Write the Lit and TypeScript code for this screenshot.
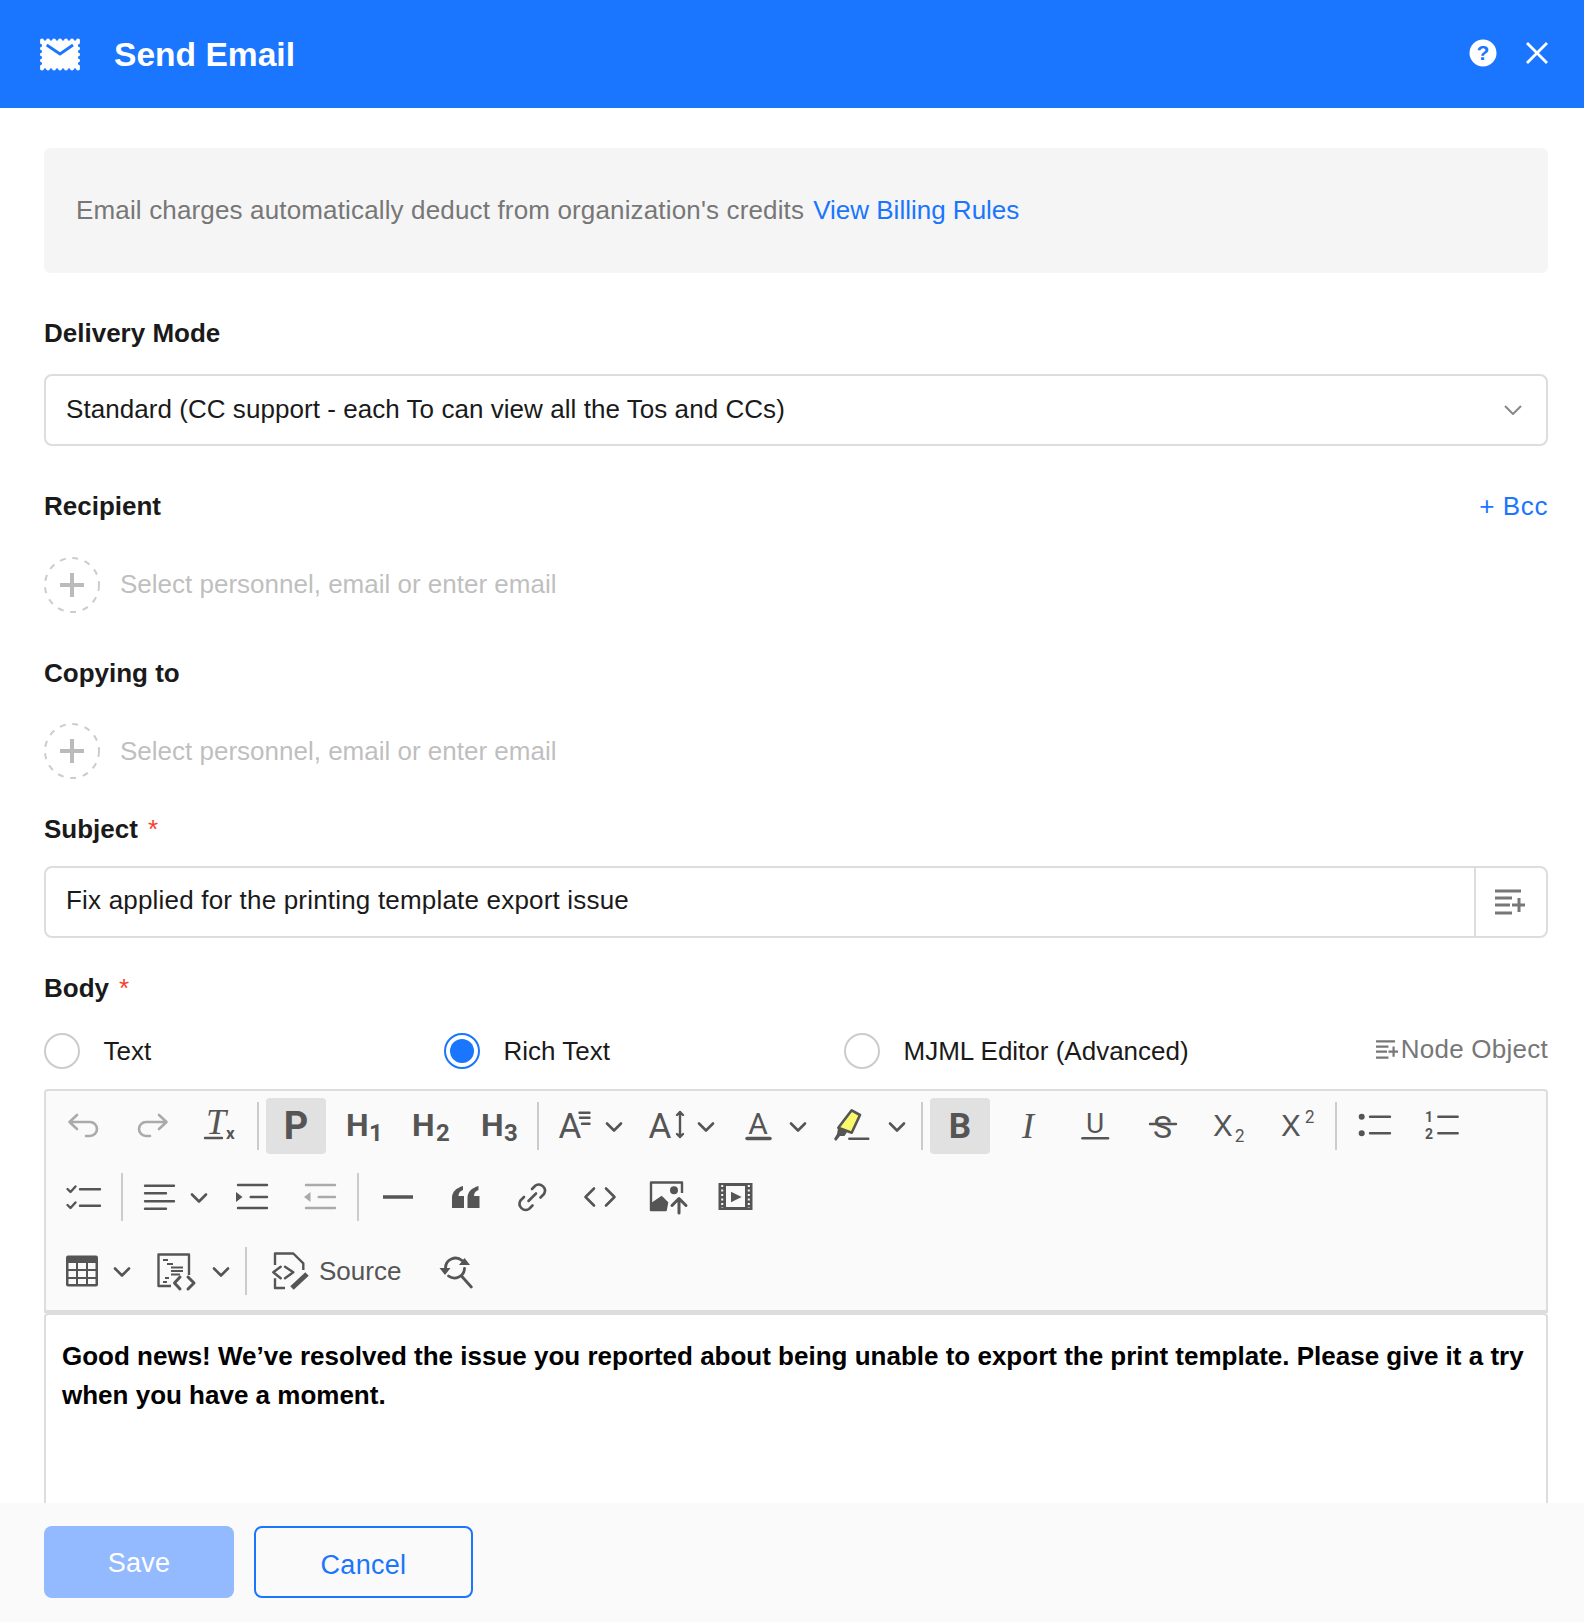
import { LitElement, html, css, svg } from 'lit';
import { customElement } from 'lit/decorators.js';

const roboto = 'font-family:Roboto,sans-serif';
const inter = 'font-family:Inter,sans-serif';

const icons = {
  undo: svg`<path class="s" d="M13 9 L5.5 16 L13 23 M5.5 16 H26 a7 7 0 0 1 0 14 H22"/>`,
  redo: svg`<path class="s" d="M27 9 L34.5 16 L27 23 M34.5 16 H14 a7 7 0 0 0 0 14 H18"/>`,
  clear: svg`<text x="6" y="28" font-size="36" style="font-family:'Liberation Serif',serif;font-style:italic">T<tspan dy="5" font-size="17" font-weight="700" style="font-style:normal;font-family:Roboto,sans-serif">x</tspan></text>
    <path class="s t" d="M5 32 H22"/>`,
  p: svg`<text x="20" y="33" font-size="38" font-weight="700" text-anchor="middle" style=${roboto}>P</text>`,
  h1: svg`<text x="2" y="30" font-size="32" font-weight="700" style=${roboto}>H</text><text x="25" y="35" font-size="24" font-weight="700" style=${roboto}>1</text>`,
  h2: svg`<text x="0" y="30" font-size="32" font-weight="700" style=${roboto}>H</text><text x="24" y="35" font-size="24" font-weight="700" style=${roboto}>2</text>`,
  h3: svg`<text x="1" y="30" font-size="32" font-weight="700" style=${roboto}>H</text><text x="24" y="35" font-size="24" font-weight="700" style=${roboto}>3</text>`,
  family: svg`<text x="20" y="32" font-size="35" text-anchor="middle" style=${roboto}>A</text>
    <path class="s t" d="M29.5 6.7 H39.5 M30 11.7 H39.5 M32 17.7 H39.5"/>`,
  size: svg`<text x="15" y="32" font-size="35" text-anchor="middle" style=${roboto}>A</text>
    <path class="s t" d="M35 6 V31 M32 9 L35 6 L38 9 M32 28 L35 31 L38 28"/>`,
  color: svg`<text x="19" y="28" font-size="30" text-anchor="middle" style=${roboto}>A</text><path class="s w35" d="M8 32.5 H31"/>`,
  highlight: svg`<path d="M23.7 4.3 L32 9 L23.7 26.7 L10.3 21.7 Z" fill="#f9f96b" stroke="#555" stroke-width="2.6" stroke-linejoin="round"/>
    <path class="f" d="M10.3 21 L19 26 L16.5 30 L12 30 L8 35 L6 33 L9 28 Z"/><path class="s t" d="M21.3 32.7 H40.3"/>`,
  bold: svg`<text x="20" y="32" font-size="35" font-weight="700" text-anchor="middle" style=${roboto}>B</text>`,
  italic: svg`<text x="20" y="32" font-size="36" text-anchor="middle" style="font-family:'Liberation Serif',serif;font-style:italic">I</text>`,
  under: svg`<text x="19" y="27" font-size="28" text-anchor="middle" style=${roboto}>U</text><path class="s" d="M6.5 32.3 H32"/>`,
  strike: svg`<text x="18.500" y="32" font-size="32" text-anchor="middle" style=${roboto}>S</text><path class="s t" d="M6 18 H32"/>`,
  sub: svg`<text x="1" y="30" font-size="29" style=${inter}>X</text><text x="22.500" y="36" font-size="17" style=${inter}>2</text>`,
  sup: svg`<text x="1" y="30" font-size="29" style=${inter}>X</text><text x="24.500" y="17" font-size="17" style=${inter}>2</text>`,
  ul: svg`<circle class="f" cx="7.7" cy="10.7" r="3"/><circle class="f" cx="7.7" cy="27.3" r="3"/><path class="s t" d="M16 10.7 H36 M16 27.3 H36"/>`,
  ol: svg`<text x="7" y="16" font-size="14" font-weight="700" text-anchor="middle" style=${roboto}>1</text><text x="7" y="33" font-size="14" font-weight="700" text-anchor="middle" style=${roboto}>2</text><path class="s t" d="M16.3 10.7 H35.7 M16.3 27.3 H35.7"/>`,
  todo: svg`<path class="s t" d="M16 12.3 H36 M16 28.7 H36 M3.5 12 L6.5 15 L11.5 9.5 M3.5 28 L6.5 31 L11.5 25.5"/>`,
  align: svg`<path class="s t" d="M6 8.7 H35 M6 16.3 H27 M6 24.3 H35 M6 31.7 H27"/>`,
  indent: svg`<path class="s t" d="M6 8 H35 M18.7 20 H35 M6 31 H35"/><path class="f" d="M4 15 L10.5 20 L4 25 Z"/>`,
  outdent: svg`<path class="s t" d="M6 8 H35 M18.7 20 H35 M6 31 H35"/><path class="f" d="M10.5 15 L4 20 L10.5 25 Z"/>`,
  hr: svg`<path class="s w35 butt" d="M7 20 H37"/>`,
  quote: svg`<path class="f" d="M8 31 V21 C8 15 12 11 19 9 V13 C16 14 14.500 16 14.500 19 H20 V31 Z M23.500 31 V21 C23.500 15 27.500 11 34.500 9 V13 C31.500 14 30 16 30 19 H35.500 V31 Z"/>`,
  link: svg`<path class="s" d="M20 12 L23.500 8.500 A6.200 6.200 0 0 1 32 17 L28.500 20.500 M20.500 28.500 L17 32 A6.200 6.200 0 0 1 8.500 23.500 L12 20 M16.500 24 L24 16.500"/>`,
  code: svg`<path class="s" d="M14 11.5 L5.5 20 L14 28.5 M26 11.5 L34.5 20 L26 28.5"/>`,
  image: svg`<path class="s t butt" d="M34 16 V5.5 H3 V33 H18"/><circle class="f" cx="26" cy="13.3" r="4"/>
    <path class="f" d="M3 26 L13.7 18.7 L20.3 25.3 L18.7 34 H3 Z"/><path class="s w3" d="M31 21.5 V36 M24 28.5 L31 21.5 L38 28.5"/>`,
  video: svg`<path class="f" fill-rule="evenodd" d="M2.500 6 H36.500 V33 H2.500 Z M10 9 V30 H29 V9 Z"/>
    <path fill="none" stroke="#fafafa" stroke-width="2" stroke-dasharray="2 2.500" d="M6.200 8 V31 M32.800 8 V31"/><path class="f" d="M15 14.7 L25.700 20 L15 25.300 Z"/>`,
  table: svg`<rect class="f" x="4" y="4.5" width="32" height="31" rx="2"/>
    <path fill="#fafafa" d="M6.500 12 H14 V18 H6.500 Z M16 12 H24 V18 H16 Z M26 12 H33.500 V18 H26 Z M6.500 20 H14 V26 H6.500 Z M16 20 H24 V26 H16 Z M26 20 H33.500 V26 H26 Z M6.500 28 H14 V33 H6.500 Z M16 28 H24 V33 H16 Z M26 28 H33.500 V33 H26 Z"/>`,
  block: svg`<path class="s t butt" d="M18 35 H5.500 V3.500 H36 V24"/><path class="s w18 butt" d="M10 9 H15 M14 13 H20 M18 16.500 H30 M18 20 H30 M18 23.500 H27 M12 27 H16 M10 31 H14"/>
    <path class="s w3" d="M27 26 L21.500 32 L27 38 M35 26 L41 32 L35 38"/>`,
  source: svg`<path class="s t butt" d="M4 14 V2.500 H22.300 L32.300 12.300 V19 M4 27.300 V37 H14"/>
    <path class="s t" d="M9.700 15.700 L2.300 21.300 L9.700 27.300 M14 15.700 L22.300 21.300 L14 27.300"/>
    <path class="s w5 butt" d="M21 37 L36 23"/>`,
  replace: svg`<path class="s w28" d="M9.500 17 A10 10 0 0 1 26 9.500 M28.500 17.500 A10 10 0 0 1 12.500 25 M25.500 25 L35.300 36"/>
    <path class="f" d="M3.500 17 H14.500 L9 24 Z M23 14 H34 L28.500 7 Z"/>`,
};

type Item =
  | { k: 'btn'; i: keyof typeof icons; off?: boolean; on?: boolean }
  | { k: 'sep'; tight?: boolean }
  | { k: 'menu'; i: keyof typeof icons; w: number; at: number; chev: number };

const rows: Item[][] = [
  [
    { k: 'btn', i: 'undo', off: true }, { k: 'btn', i: 'redo', off: true }, { k: 'btn', i: 'clear' }, { k: 'sep' },
    { k: 'btn', i: 'p', on: true }, { k: 'btn', i: 'h1' }, { k: 'btn', i: 'h2' }, { k: 'btn', i: 'h3' }, { k: 'sep' },
    { k: 'menu', i: 'family', w: 86, at: 24, chev: 68 }, { k: 'menu', i: 'size', w: 86, at: 25, chev: 66 },
    { k: 'menu', i: 'color', w: 86, at: 25, chev: 64 }, { k: 'menu', i: 'highlight', w: 86, at: 20, chev: 69 }, { k: 'sep' },
    { k: 'btn', i: 'bold', on: true }, { k: 'btn', i: 'italic' }, { k: 'btn', i: 'under' }, { k: 'btn', i: 'strike' },
    { k: 'btn', i: 'sub' }, { k: 'btn', i: 'sup' }, { k: 'sep', tight: true }, { k: 'btn', i: 'ul' }, { k: 'btn', i: 'ol' },
  ],
  [
    { k: 'btn', i: 'todo' }, { k: 'sep' }, { k: 'menu', i: 'align', w: 84, at: 29, chev: 69 }, { k: 'btn', i: 'indent' },
    { k: 'btn', i: 'outdent', off: true }, { k: 'sep' }, { k: 'btn', i: 'hr' }, { k: 'btn', i: 'quote' }, { k: 'btn', i: 'link' },
    { k: 'btn', i: 'code' }, { k: 'btn', i: 'image' }, { k: 'btn', i: 'video' },
  ],
  [
    { k: 'menu', i: 'table', w: 84, at: 28, chev: 68 }, { k: 'menu', i: 'block', w: 92, at: 27, chev: 75 }, { k: 'sep' },
  ],
];

@customElement('app-root')
export class AppRoot extends LitElement {
  static styles = css`
    :host {
      display: flex;
      flex-direction: column;
      width: 1584px;
      height: 1622px;
      overflow: hidden;
      background: #fff;
      color: #1a1a1a;
      font-family: 'Liberation Sans', Arial, sans-serif;
      font-size: 26px;
    }
    header {
      flex: none;
      display: flex;
      align-items: center;
      height: 108px;
      background: #1a75ff;
      color: #fff;
    }
    .stamp { width: 40px; height: 33px; margin-left: 40px; }
    h1 { margin: 2px 0 0 34px; flex: 1; font-size: 33.6px; font-weight: 700; }
    .help { width: 28px; height: 28px; margin: -2px 29px 0 0; }
    .close { width: 22px; height: 22px; margin: -2px 36px 0 0; }

    main { flex: 1; min-height: 0; overflow: hidden; padding: 0 36px 0 44px; }
    .notice {
      display: flex;
      align-items: center;
      gap: 9px;
      height: 125px;
      margin-top: 40px;
      padding: 0 32px;
      background: #f5f5f5;
      border-radius: 6px;
      color: #777;
    }
    .notice span { letter-spacing: 0.15px; }
    a { color: #1a75ff; text-decoration: none; }
    .label { display: flex; align-items: center; justify-content: space-between; height: 36px; margin-top: 32px; font-weight: 700; }
    .label.wide { margin-top: 42px; }
    .label .req { color: #f5402c; font-weight: 400; margin-left: 10px; }
    .label .name { display: flex; align-items: center; }
    .label a { font-weight: 400; letter-spacing: 0.6px; }
    .field {
      display: flex;
      align-items: center;
      box-sizing: border-box;
      height: 72px;
      border: 2px solid #ddd;
      border-radius: 8px;
    }
    .field .value { flex: 1; padding: 0 0 2px 20px; }
    .select { margin-top: 23px; }
    .select .value { letter-spacing: 0.05px; }
    .select svg { width: 18px; height: 10px; margin-right: 24px; }
    .subject { margin-top: 19px; }
    .subject .value { padding-bottom: 4px; letter-spacing: 0.19px; }
    .subject .addon {
      display: flex;
      align-items: center;
      justify-content: center;
      align-self: stretch;
      width: 70px;
      border-left: 2px solid #ddd;
    }
    .subject .addon svg { width: 30px; height: 26px; margin: 0 2px 0 0; }
    .people { display: flex; align-items: center; gap: 20px; margin-top: 33px; color: #bfbfbf; }
    .people.second { margin-top: 32px; }
    .people span { padding-bottom: 2px; }
    .people.second span { padding-bottom: 0; }
    .people svg { width: 56px; height: 56px; }
    .modes { display: flex; align-items: center; height: 36px; margin-top: 27px; }
    .mode { display: flex; align-items: center; gap: 23.5px; width: 400px; }
    .radio { box-sizing: border-box; width: 36px; height: 36px; border: 2px solid #ccc; border-radius: 50%; }
    .radio.on { border-color: #1a75ff; padding: 4px; }
    .radio.on::before { content: ''; display: block; width: 24px; height: 24px; border-radius: 50%; background: #1a75ff; }
    .node { margin-left: auto; display: flex; align-items: center; gap: 3px; color: #777; margin-top: -4px; letter-spacing: 0.25px; }
    .node svg { width: 22px; height: 19px; }

    .toolbar {
      box-sizing: border-box;
      height: 224px;
      margin-top: 20px;
      padding: 7px 8px 0;
      background: #fafafa;
      border: 2px solid #ddd;
      border-bottom-width: 3px;
      border-radius: 4px 4px 0 0;
    }
    .row { display: flex; align-items: center; gap: 8px; height: 56px; color: #555; }
    .row + .row { margin-top: 15px; }
    .row:last-child { margin-top: 18px; }
    .btn { display: flex; align-items: center; justify-content: center; flex: none; width: 60px; height: 56px; border-radius: 4px; }
    .btn.on { background: #e1e1e1; }
    .off { color: #aaa; }
    .sep { flex: none; width: 2px; height: 48px; margin: 0 -1px; background: #ccc; }
    .sep.tight { margin-left: -3px; }
    .menu { display: flex; align-items: center; flex: none; height: 56px; position: relative; }
    .menu svg { position: absolute; top: 8px; }
    .menu svg.chev { top: 24px; }
    svg.ic { width: 40px; height: 40px; overflow: visible; flex: none; }
    svg.chev { width: 18px; height: 10px; overflow: visible; }
    .source { display: flex; align-items: center; flex: none; width: 164px; height: 56px; padding-left: 17px; box-sizing: border-box; gap: 8px; color: #555; font-size: 26px; }
    .s { fill: none; stroke: currentColor; stroke-width: 2.6; stroke-linecap: round; stroke-linejoin: round; }
    .t { stroke-width: 2.4; }
    .w18 { stroke-width: 1.8; }
    .w28 { stroke-width: 2.8; }
    .w3 { stroke-width: 3; }
    .w35 { stroke-width: 3.5; }
    .w5 { stroke-width: 5; }
    .butt { stroke-linecap: butt; }
    .f { fill: currentColor; stroke: none; }
    text { fill: currentColor; }

    .editor { box-sizing: border-box; height: 300px; padding: 22px 16px 0; border: 2px solid #ddd; border-radius: 4px 4px 0 0; font-weight: 700; line-height: 39px; color: #000; }

    footer { flex: none; display: flex; gap: 20px; height: 119px; padding: 23px 0 0 44px; box-sizing: border-box; background: #fafafa; }
    button { box-sizing: border-box; height: 72px; border-radius: 8px; font: inherit; font-size: 27px; letter-spacing: 0.3px; }
    .save { width: 190px; border: 0; padding-top: 4px; background: #93b9ff; color: #fff; }
    .cancel { width: 219px; border: 2px solid #1a75ff; background: transparent; color: #1a75ff; padding-top: 7px; }
  `;

  private ic(name: keyof typeof icons) {
    return html`<svg class="ic" viewBox="0 0 40 40">${icons[name]}</svg>`;
  }

  private chev(extra = '') {
    return html`<svg class="chev" viewBox="0 0 18 10" style=${extra}><path class="s" d="M2 1.500 L9 8.500 L16 1.500"/></svg>`;
  }

  private item(it: Item) {
    if (it.k === 'sep') return html`<div class="sep ${it.tight ? 'tight' : ''}"></div>`;
    if (it.k === 'btn') {
      return html`<div class="btn ${it.on ? 'on' : ''} ${it.off ? 'off' : ''}">${this.ic(it.i)}</div>`;
    }
    return html`<div class="menu" style="width:${it.w}px">
      <svg class="ic" viewBox="0 0 40 40" style="left:${it.at - 20}px">${icons[it.i]}</svg>
      ${this.chev(`left:${it.chev - 9}px`)}
    </div>`;
  }

  private people() {
    return html`<svg viewBox="0 0 56 56">
        <circle cx="28" cy="28" r="27" fill="none" stroke="#ccc" stroke-width="2" stroke-dasharray="6 6.700"/>
        <path d="M28 16 V40 M16 28 H40" stroke="#bbb" stroke-width="4" fill="none"/>
      </svg>
      <span>Select personnel, email or enter email</span>`;
  }

  private listPlus() {
    return html`<svg viewBox="0 0 30 26"><path d="M0 2 H26 M0 9 H17 M0 16 H15 M0 24 H17 M24 9 V23 M17 16 H31" stroke="#777" stroke-width="3" fill="none"/></svg>`;
  }

  private stamp() {
    const top = [...Array(7).keys()].map((i) => svg`<circle cx=${2 + i * 6} cy="2.500" r="2"/><circle cx=${2 + i * 6} cy="30.500" r="2"/>`);
    const side = [...Array(5).keys()].map((i) => svg`<circle cx="2" cy=${4.500 + i * 6} r="2"/><circle cx="38" cy=${4.500 + i * 6} r="2"/>`);
    return html`<svg class="stamp" viewBox="0 0 40 33">
      <g fill="#fff">${top}${side}<rect x="2" y="2.500" width="36" height="28"/></g>
      <path d="M6.700 7 L20 16 L33 7" fill="none" stroke="#1a75ff" stroke-width="2.800"/>
    </svg>`;
  }

  protected render() {
    return html`
      <header>
        ${this.stamp()}
        <h1>Send Email</h1>
        <svg class="help" viewBox="0 0 28 28"><circle cx="14" cy="14" r="13.500" fill="#fff"/><text x="14" y="21" font-size="21" font-weight="700" text-anchor="middle" style="fill:#1a75ff">?</text></svg>
        <svg class="close" viewBox="0 0 22 22"><path d="M1 1 L21 21 M21 1 L1 21" stroke="#fff" stroke-width="2.800"/></svg>
      </header>
      <main>
        <div class="notice">
          <span>Email charges automatically deduct from organization's credits</span>
          <a href="#">View Billing Rules</a>
        </div>
        <div class="label wide">Delivery Mode</div>
        <div class="field select">
          <span class="value">Standard (CC support - each To can view all the Tos and CCs)</span>
          <svg viewBox="0 0 18 10"><path d="M1 1 L9 9 L17 1" fill="none" stroke="#888" stroke-width="2"/></svg>
        </div>
        <div class="label wide">Recipient <a href="#">+ Bcc</a></div>
        <div class="people">${this.people()}</div>
        <div class="label wide">Copying to</div>
        <div class="people second">${this.people()}</div>
        <div class="label"><span class="name">Subject <span class="req">*</span></span></div>
        <div class="field subject">
          <span class="value">Fix applied for the printing template export issue</span>
          <div class="addon">${this.listPlus()}</div>
        </div>
        <div class="label"><span class="name">Body <span class="req">*</span></span></div>
        <div class="modes">
          <label class="mode"><span class="radio"></span>Text</label>
          <label class="mode"><span class="radio on"></span>Rich Text</label>
          <label class="mode"><span class="radio"></span>MJML Editor (Advanced)</label>
          <span class="node">${this.listPlus()}Node Object</span>
        </div>
        <div class="toolbar">
          ${rows.map((row, n) => html`<div class="row">
            ${row.map((it) => this.item(it))}
            ${n === 2
              ? html`<div class="source">${this.ic('source')}<span>Source</span></div><div class="btn">${this.ic('replace')}</div>`
              : ''}
          </div>`)}
        </div>
        <div class="editor">
          Good news! We’ve resolved the issue you reported about being unable to export the print template. Please give it a try when you have a moment.
        </div>
      </main>
      <footer>
        <button class="save">Save</button>
        <button class="cancel">Cancel</button>
      </footer>
    `;
  }
}

declare global {
  interface HTMLElementTagNameMap {
    'app-root': AppRoot;
  }
}
